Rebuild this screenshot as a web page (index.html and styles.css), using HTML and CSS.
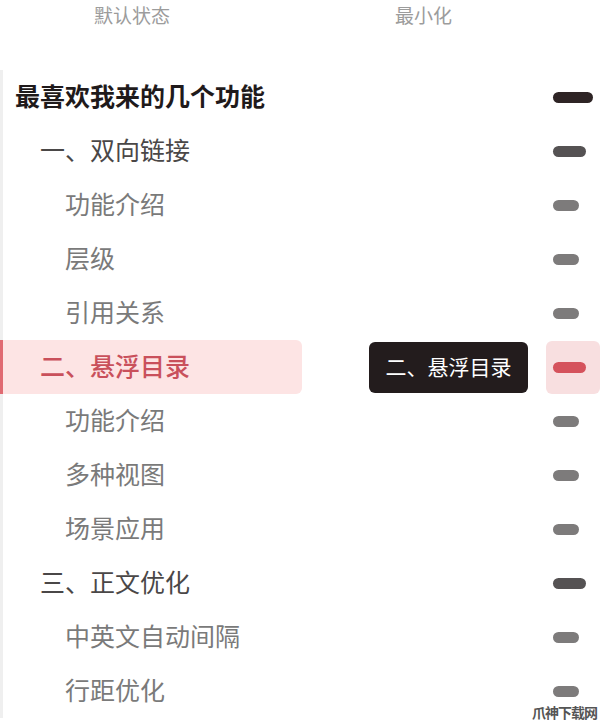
FILE: index.html
```
<!DOCTYPE html>
<html lang="zh">
<head>
<meta charset="utf-8">
<link rel="stylesheet" href="styles.css">
</head>
<body>
<div class="page">
  <div class="head">
    <span class="head-a">默认状态</span>
    <span class="head-b">最小化</span>
  </div>
  <div class="toc">
    <div class="row"><div class="item l0">最喜欢我来的几个功能</div><div class="mid"></div><div class="mark"><span class="bar b0"></span></div></div>
    <div class="row"><div class="item l1">一、双向链接</div><div class="mid"></div><div class="mark"><span class="bar b1"></span></div></div>
    <div class="row"><div class="item l2">功能介绍</div><div class="mid"></div><div class="mark"><span class="bar b2"></span></div></div>
    <div class="row"><div class="item l2">层级</div><div class="mid"></div><div class="mark"><span class="bar b2"></span></div></div>
    <div class="row"><div class="item l2">引用关系</div><div class="mid"></div><div class="mark"><span class="bar b2"></span></div></div>
    <div class="row"><div class="item l1 active">二、悬浮目录</div><div class="mid"><div class="tip">二、悬浮目录</div></div><div class="mark"><span class="mark-box"><span class="bar b1 red"></span></span></div></div>
    <div class="row"><div class="item l2">功能介绍</div><div class="mid"></div><div class="mark"><span class="bar b2"></span></div></div>
    <div class="row"><div class="item l2">多种视图</div><div class="mid"></div><div class="mark"><span class="bar b2"></span></div></div>
    <div class="row"><div class="item l2">场景应用</div><div class="mid"></div><div class="mark"><span class="bar b2"></span></div></div>
    <div class="row"><div class="item l1">三、正文优化</div><div class="mid"></div><div class="mark"><span class="bar b1"></span></div></div>
    <div class="row"><div class="item l2">中英文自动间隔</div><div class="mid"></div><div class="mark"><span class="bar b2"></span></div></div>
    <div class="row"><div class="item l2">行距优化</div><div class="mid"></div><div class="mark"><span class="bar b2"></span></div></div>
  </div>
  <div class="watermark">爪神下载网</div>
</div>
</body>
</html>
```
FILE: styles.css
```
* { box-sizing: border-box; }
html, body { margin: 0; padding: 0; background: #fff; }
body {
  font-family: "Noto Sans CJK SC", "Noto Sans", sans-serif;
  width: 600px;
  height: 721px;
  overflow: hidden;
}
.page { position: relative; width: 600px; height: 721px; }
.head {
  height: 70px;
  display: flex;
  align-items: flex-start;
  color: #9c9c9c;
  font-size: 19px;
  line-height: 30px;
}
.head-a { margin-left: 94px; }
.head-b { margin-left: 225px; }
.toc { display: flex; flex-direction: column; }
.row {
  display: grid;
  grid-template-columns: 302px 1fr 54px;
  height: 54px;
  align-items: center;
}
.item {
  height: 54px;
  display: flex;
  align-items: center;
  padding-bottom: 4px;
  border-left: 3px solid #efefef;
  font-size: 25px;
  line-height: 1;
  white-space: nowrap;
}
.l0 { padding-left: 12px; color: #1f1a1b; font-weight: 700; }
.l1 { padding-left: 37px; color: #4a4747; }
.l2 { padding-left: 62px; color: #7a7a7a; }
.item.active {
  background: #fde4e4;
  border-left-color: #e06a72;
  color: #c9505b;
  font-weight: 500;
  border-radius: 0 6px 6px 0;
}
.mid { display: flex; justify-content: flex-end; height: 54px; align-items: center; }
.tip {
  background: #231c1d;
  color: #fff;
  font-size: 21px;
  height: 51px;
  width: 159px;
  padding-bottom: 3px;
  border-radius: 6px;
  display: flex;
  align-items: center;
  justify-content: center;
  margin-right: 18px;
}
.mark {
  height: 54px;
  display: flex;
  align-items: center;
  padding-left: 7px;
}
.mark-box {
  width: 54px;
  height: 53px;
  margin-left: -7px;
  padding-left: 7px;
  background: #f8dfe0;
  border-radius: 6px;
  display: flex;
  align-items: center;
}
.bar { display: block; height: 11px; border-radius: 6px; }
.b0 { width: 40px; background: #2e2425; }
.b1 { width: 33px; background: #555253; }
.b2 { width: 26px; background: #7d7b7b; }
.bar.red { background: #d5525c; }
.watermark {
  position: absolute;
  right: 3px;
  bottom: 1px;
  font-size: 14px;
  line-height: 16px;
  font-weight: 700;
  color: #555;
  letter-spacing: -1px;
}
```
